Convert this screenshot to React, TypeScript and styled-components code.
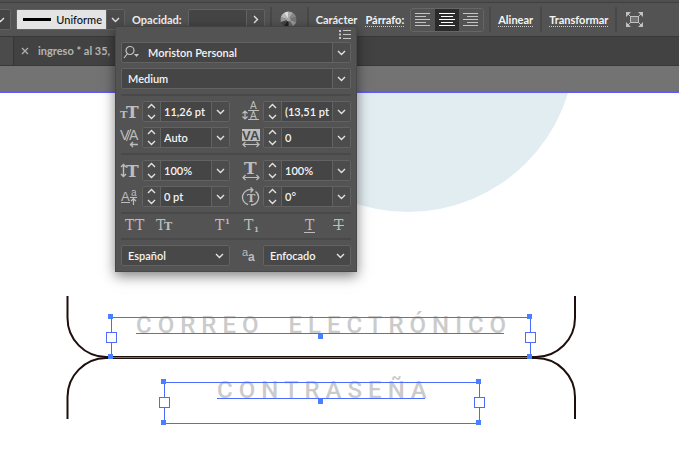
import React from 'react';
import styled, { createGlobalStyle, css } from 'styled-components';

const GlobalStyle = createGlobalStyle`
  *, *::before, *::after { box-sizing: border-box; }
  html, body { margin: 0; }
  body { background: #fff; color: #f2f2f2; font: 600 11px/14px Lato, "Noto Sans", sans-serif; }
  button, input, select { font: inherit; color: inherit; margin: 0; padding: 0; border: 0; border-radius: 0; background: none; outline: 0; }
  svg { display: block; flex: none; overflow: visible; }
`;

const Page = styled.div`
  position: relative;
  display: flex;
  flex-direction: column;
  min-height: 100vh;
  overflow: hidden;
`;

const Toolbar = styled.header`
  display: flex;
  align-items: center;
  height: 37px;
  padding-bottom: 1px;
  padding-top: 2px;
  background: #535353;
  border-top: 2px solid #4f4f4f;
  border-bottom: 1px solid #383838;
  box-shadow: inset 0 1px #404040;
`;

const Boxed = styled.div`
  display: flex;
  align-items: stretch;
  height: 21px;
  min-width: 0;
  border: 1px solid #626262;
  border-radius: 2px;
  background: #454545;
`;

const PreviousField = styled(Boxed)`
  width: 11px;
  align-items: center;
  border-left: 0;
  border-radius: 0 2px 2px 0;
  margin-right: 5px;
  padding-right: 5px;
  overflow: hidden;
  justify-content: flex-end;
`;

const StrokeField = styled(Boxed)`
  width: 109px;
  margin-right: 7px;
`;

const StrokeSwatch = styled.button`
  display: flex;
  align-items: center;
  gap: 5px;
  flex: 1;
  padding: 0 4px 0 6px;
  background: #e4e4e4;
  color: #111;
  font-weight: 500;
`;

const StrokeLine = styled.span`
  flex: 1;
  height: 3px;
  background: #000;
`;

const OpacityField = styled(Boxed)`
  width: 77px;
  margin-left: 6px;
`;

const ArrowButton = styled.button`
  display: flex;
  align-items: center;
  justify-content: center;
  flex: none;
  width: 18px;
  border-left: 1px solid #626262;
  background: #4c4c4c;
`;

const Divider = styled.span`
  flex: none;
  width: 2px;
  height: 25px;
  background: #484848;
`;

const SpacedDivider = styled(Divider)`
  margin-left: 5px;
`;

const toolbarText = css`
  flex: none;
  color: #f4f4f4;
  font-weight: 700;
  line-height: 13px;
  border-bottom: 1px dotted #c8c8c8;
`;

const PanelLink = styled.a`
  ${toolbarText}
  text-decoration: none;
`;

const OpacityLabel = styled.label`
  ${toolbarText}
`;

const ColorButton = styled.button`
  margin: 0 10px 0 8px;
`;

const LinkGroup = styled.div`
  display: flex;
  gap: 8px;
  padding: 0 6px 0 7px;
`;

const SpacedLink = styled(PanelLink)`
  margin: 0 7px;
`;

const AlignGroup = styled.div`
  display: flex;
  flex: none;
  height: 24px;
  width: 74px;
  margin-right: 5px;
  border: 1px solid #666;
  border-radius: 3px;
  overflow: hidden;
`;

const AlignButton = styled.button<{ $active?: boolean }>`
  display: flex;
  flex: 1;
  align-items: center;
  justify-content: center;
  color: ${p => (p.$active ? '#fff' : '#c4c4c4')};
  background: ${p => (p.$active ? '#2b2b2b' : '#535353')};
`;

const FitButton = styled.button`
  margin-left: 9px;
`;

const Tabs = styled.nav`
  display: flex;
  height: 29px;
  background: #424242;
  border-bottom: 1px solid #383838;
`;

const ClippedTab = styled.div`
  width: 14px;
  background: #4b4b4b;
  border-right: 1px solid #363636;
`;

const Tab = styled.div`
  display: flex;
  align-items: center;
  gap: 9px;
  padding-left: 7px;
  color: #b4b4b4;
  font-weight: 700;
`;

const Pasteboard = styled.div`
  height: 27px;
  background: #737373;
  border-bottom: 2px solid #5f5bff;
`;

const Canvas = styled.main`
  position: relative;
  flex: 1;
  min-height: 362px;
  background: #fff;
`;

const Artwork = styled.svg`
  position: absolute;
  left: 0;
  top: 0;
`;

const Frame = styled.div<{ $x: number; $y: number; $w: number; $h: number }>`
  position: absolute;
  left: ${p => p.$x}px;
  top: ${p => p.$y}px;
  width: ${p => p.$w}px;
  height: ${p => p.$h}px;
`;

const FrameOutline = styled.div`
  position: absolute;
  inset: 0;
  border: 1px solid #4c6cff;
`;

const FrameText = styled.div<{ $x: number }>`
  position: absolute;
  left: ${p => p.$x}px;
  top: -6px;
  color: #cbcbcb;
  font: 500 24px/28px Roboto, "Liberation Sans", sans-serif;
  letter-spacing: 6px;
  white-space: pre;
`;

const Baseline = styled.div<{ $x: number; $w: number }>`
  position: absolute;
  left: ${p => p.$x}px;
  width: ${p => p.$w}px;
  top: 16px;
  height: 1px;
  background: #4c6cff;
`;

const Handle = styled.span<{ $x: number; $y: number }>`
  position: absolute;
  left: ${p => p.$x}px;
  top: ${p => p.$y}px;
  width: 5px;
  height: 5px;
  background: #4a80ff;
`;

const Port = styled.span<{ $x: number }>`
  position: absolute;
  left: ${p => p.$x}px;
  top: 15px;
  width: 11px;
  height: 11px;
  border: 1px solid #4c6cff;
  background: #fff;
`;

const Panel = styled.section`
  position: absolute;
  left: 115px;
  top: 26px;
  width: 242px;
  padding: 3px 5px 5px;
  background: #535353;
  border: 1px solid #484848;
  border-top-color: #444;
  box-shadow: 0 4px 12px rgba(0, 0, 0, 0.5);
`;

const PanelMenu = styled.button`
  display: block;
  margin: 0 0 3px auto;
`;

const FamilyStack = styled.div`
  display: grid;
  gap: 5px;
`;

const Rule = styled.hr`
  height: 2px;
  margin: 5px 0;
  border: 0;
  background: #494949;
`;

const MetricGrid = styled.div`
  display: grid;
  grid-template-columns: 21px 1fr 33px 1fr;
  row-gap: 5px;
  align-items: center;
`;

const IconCell = styled.span<{ $second?: boolean }>`
  display: flex;
  padding-left: ${p => (p.$second ? 12 : 0)}px;
`;

const textBox = css`
  flex: 1;
  min-width: 0;
  width: 0;
  height: 19px;
  color: #f4f4f4;
`;

const Input = styled.input<{ $inset?: number }>`
  ${textBox}
  padding-left: ${p => p.$inset ?? 3}px;
`;

const Select = styled.select`
  ${textBox}
  appearance: none;
  padding-left: 6px;
`;

const Spinner = styled.span`
  display: flex;
  flex-direction: column;
  flex: none;
  width: 18px;
  border-right: 1px solid #626262;
  background: #4c4c4c;
`;

const SpinButton = styled.button`
  display: flex;
  flex: 1;
  align-items: center;
  justify-content: center;
`;

const SearchIcon = styled.span`
  display: flex;
  align-items: center;
  padding-left: 1px;
`;

const SelectField = styled(Boxed)`
  align-items: center;
  padding-right: 5px;
  background: #484848;
`;

const StyleRow = styled.div`
  display: flex;
  align-items: center;
  height: 14px;
  padding: 0 5px 0 4px;
`;

const StyleButton = styled.button<{ $gap?: number }>`
  margin-right: ${p => p.$gap ?? 0}px;
`;

const LanguageRow = styled.div`
  display: grid;
  grid-template-columns: 109px 33px 1fr;
  align-items: center;
`;

const Chevron = ({ up = false, right = false }: { up?: boolean; right?: boolean }) => (
  <svg width="9" height="7" viewBox="0 0 9 7" fill="none" stroke="#e2e2e2" strokeWidth="1.4">
    <path d={right ? 'M3 0 6.500 3.500 3 7' : up ? 'M1 5 4.5 1.5 8 5' : 'M1 2 4.5 5.5 8 2'} />
  </svg>
);

const AlignIcon = ({ lines }: { lines: [number, number][] }) => (
  <svg width="16" height="14" viewBox="0 0 16 14" fill="currentColor">
    {lines.map(([x, w], i) => <rect key={i} x={x} y={i * 3} width={w} height="1" />)}
  </svg>
);

const slab = { fontFamily: '"DejaVu Serif", serif' };
const plain = { fontFamily: '"Liberation Sans", Arial, sans-serif' };

const Glyph = ({ w = 20, h = 20, children }: { w?: number; h?: number; children: React.ReactNode }) => (
  <svg width={w} height={h} viewBox={`0 0 ${w} ${h}`} fill="#bdbdbd" fontWeight="400">{children}</svg>
);

const line = { fill: 'none', stroke: '#bdbdbd', strokeWidth: 1 };

const SizeIcon = () => (
  <Glyph>
    <text x="-1" y="16" fontSize="10" fontWeight="700" {...slab}>T</text>
    <text x="5" y="16" fontSize="17" fontWeight="700" {...slab}>T</text>
  </Glyph>
);
const LeadingIcon = () => (
  <Glyph>
    <path {...line} strokeWidth="1.2" d="M3 9v8M.5 11.500l2.500-2.500 2.500 2.500M.5 14.500 3 17l2.500-2.500M6 8.500h11M6 17.500h11" />
    <text x="8" y="7" fontSize="10" {...plain}>A</text>
    <text x="8" y="17" fontSize="10" {...plain}>A</text>
  </Glyph>
);
const KerningIcon = () => (
  <Glyph>
    <text x="-1" y="12" fontSize="14" {...plain}>V</text>
    <text x="8" y="12" fontSize="14" {...plain}>A</text>
    <path {...line} d="M5.500 13 10 1" />
    <path {...line} strokeWidth="1.3" d="M9 16.500h8M12 14l-2.500 2.500L12 19" />
  </Glyph>
);
const TrackingIcon = () => (
  <Glyph>
    <rect x="0" y="1" width="18" height="12" />
    <text x="0" y="12" fontSize="13" fontWeight="700" fill="#484848" {...plain}>V</text>
    <text x="8" y="12" fontSize="13" fontWeight="700" fill="#484848" {...plain}>A</text>
    <path {...line} strokeWidth="1.2" d="M1 16.5h16M3.500 14 1 16.500 3.500 19M14.500 14l2.500 2.500-2.500 2.500" />
  </Glyph>
);
const VerticalScaleIcon = () => (
  <Glyph>
    <path {...line} strokeWidth="1.4" d="M2.5 3.500v12M0 6l2.500-2.500L5 6M0 13l2.500 2.500L5 13" />
    <text x="5" y="16" fontSize="17" fontWeight="700" {...slab}>T</text>
  </Glyph>
);
const HorizontalScaleIcon = () => (
  <Glyph>
    <text x="2" y="13" fontSize="17" fontWeight="700" {...slab}>T</text>
    <path {...line} strokeWidth="1.2" d="M1 16.5h16M3.5 14 1 16.5 3.5 19M14.5 14l2.5 2.5-2.5 2.5" />
  </Glyph>
);
const BaselineIcon = () => (
  <Glyph>
    <text x="0" y="14" fontSize="13" {...plain}>A</text>
    <text x="10" y="9" fontSize="10" {...plain}>a</text>
    <path {...line} strokeWidth="1.2" d="M0 15.500h9M9 10.500h7M12.500 18v-6M10 14l2.500-2.500L15 14" />
  </Glyph>
);
const RotateIcon = () => (
  <Glyph>
    <path {...line} strokeWidth="1.3" d="M10 3A7.500 7.500 0 0 0 6 17.500M9 18A7.500 7.500 0 0 0 13.500 4.500M8.500 .5 11 3 8.500 5.500" />
    <text x="5" y="15" fontSize="11" fontWeight="700" {...slab}>T</text>
  </Glyph>
);
const AntialiasIcon = () => (
  <Glyph w={16} h={16}>
    <text x="0" y="8" fontSize="11" {...plain}>a</text>
    <text x="6" y="13" fontSize="12" fontWeight="700" {...plain}>a</text>
  </Glyph>
);

const Metric = ({ label, value, icon, second }: { label: string; value: string; icon: React.ReactNode; second?: boolean }) => (
  <>
    <IconCell $second={second}>{icon}</IconCell>
    <Boxed>
      <Spinner>
        <SpinButton aria-label={`Aumentar ${label}`}><Chevron up /></SpinButton>
        <SpinButton aria-label={`Reducir ${label}`}><Chevron /></SpinButton>
      </Spinner>
      <Input aria-label={label} defaultValue={value} />
      <ArrowButton aria-label={`Opciones de ${label}`}><Chevron /></ArrowButton>
    </Boxed>
  </>
);

const TextFrame = ({ x, y, w, h, text, textX, textW, midX }: {
  x: number; y: number; w: number; h: number; text: string; textX: number; textW: number; midX: number;
}) => (
  <Frame $x={x} $y={y} $w={w} $h={h}>
    <FrameText $x={textX}>{text}</FrameText>
    <FrameOutline />
    <Baseline $x={textX} $w={textW} />
    <Handle $x={-3} $y={-3} />
    <Handle $x={w - 4} $y={-3} />
    <Handle $x={-3} $y={h - 4} />
    <Handle $x={w - 4} $y={h - 4} />
    <Handle $x={midX} $y={17} />
    <Port $x={-5} />
    <Port $x={w - 6} />
  </Frame>
);

const wheel = ['#aaa', '#888', '#777', '#999', '#666', '#222', '#444', '#999', '#bbb', '#ddd'];

const ColorWheel = () => (
  <svg width="17" height="17" viewBox="-8.5 -8.5 17 17">
    {wheel.map((fill, i) => {
      const a = (i * Math.PI) / 5 - Math.PI / 2;
      const b = ((i + 1) * Math.PI) / 5 - Math.PI / 2;
      return <path key={i} fill={fill} d={`M0 0L${8 * Math.cos(a)} ${8 * Math.sin(a)}A8 8 0 0 1 ${8 * Math.cos(b)} ${8 * Math.sin(b)}Z`} />;
    })}
    <circle r="2" fill="#aaa" />
  </svg>
);

export default function App() {
  return (
    <Page>
      <GlobalStyle />
      <Toolbar>
        <PreviousField><Chevron /></PreviousField>
        <StrokeField>
          <StrokeSwatch><StrokeLine />Uniforme</StrokeSwatch>
          <ArrowButton aria-label="Perfil de trazo"><Chevron /></ArrowButton>
        </StrokeField>
        <OpacityLabel htmlFor="opacity">Opacidad:</OpacityLabel>
        <OpacityField>
          <Input id="opacity" />
          <ArrowButton aria-label="Ajustar opacidad"><Chevron right /></ArrowButton>
        </OpacityField>
        <SpacedDivider />
        <ColorButton aria-label="Volver a colorear"><ColorWheel /></ColorButton>
        <Divider />
        <LinkGroup>
          <PanelLink href="#caracter">Carácter</PanelLink>
          <PanelLink href="#parrafo">Párrafo:</PanelLink>
        </LinkGroup>
        <AlignGroup>
          <AlignButton aria-label="Alinear a la izquierda"><AlignIcon lines={[[0, 15], [0, 11], [0, 15], [0, 11], [0, 15]]} /></AlignButton>
          <AlignButton $active aria-label="Centrar"><AlignIcon lines={[[0, 16], [2, 12], [0, 16], [2, 12], [0, 16]]} /></AlignButton>
          <AlignButton aria-label="Alinear a la derecha"><AlignIcon lines={[[0, 15], [4, 11], [0, 15], [4, 11], [0, 15]]} /></AlignButton>
        </AlignGroup>
        <Divider />
        <SpacedLink href="#alinear">Alinear</SpacedLink>
        <Divider />
        <SpacedLink href="#transformar">Transformar</SpacedLink>
        <Divider />
        <FitButton aria-label="Aislar objeto">
          <svg width="17" height="15" viewBox="0 0 17 15" fill="#c0c0c0">
            <rect x="4.5" y="4.5" width="8" height="6" fill="#737373" stroke="#c0c0c0" />
            <path d="M0 0h5L0 5zM17 0h-5l5 5zM0 15h5L0 10zM17 15h-5l5-5z" />
            <path d="m1 1 4 4M16 1l-4 4M1 14l4-4M16 14l-4-4" stroke="#c0c0c0" />
          </svg>
        </FitButton>
      </Toolbar>
      <Tabs>
        <ClippedTab />
        <Tab>
          <svg width="8" height="8" viewBox="0 0 8 8" stroke="#b0b0b0" strokeWidth="1.3"><path d="m1 1 6 6M7 1 1 7" /></svg>
          ingreso * al 35,
        </Tab>
      </Tabs>
      <Pasteboard />
      <Canvas>
        <Artwork width="679" height="362" viewBox="0 93 679 362" fill="none">
          <defs><clipPath id="artboard"><rect y="93" width="679" height="362" /></clipPath></defs>
          <circle cx="408" cy="45" r="167" fill="#e2edf2" clipPath="url(#artboard)" />
          <g stroke="#1d0f0c" strokeWidth="2">
            <path d="M67.5 296V318A39 39 0 0 0 106 357H536A39 39 0 0 0 575 318V296" />
            <path d="M67.5 419V397A39 39 0 0 1 106 358H536A39 39 0 0 1 575 397V419" />
          </g>
        </Artwork>
        <TextFrame x={111} y={224} w={420} h={41} text="CORREO  ELECTRÓNICO" textX={25} textW={368} midX={207} />
        <TextFrame x={164} y={289} w={316} h={42} text="CONTRASEÑA" textX={53} textW={208} midX={154} />
      </Canvas>

      <Panel aria-label="Carácter">
        <PanelMenu aria-label="Menú del panel">
          <svg width="12" height="9" viewBox="0 0 12 9" fill="#c4c4c4">
            <path d="M0 0h2v2H0zM4 0h8v1H4zM0 3.5h2v2H0zM4 4h8v1H4zM0 7h2v2H0zM4 8h8v1H4z" />
          </svg>
        </PanelMenu>
        <FamilyStack>
          <Boxed>
            <SearchIcon>
              <svg width="18" height="13" viewBox="0 0 18 13" fill="none" stroke="#c4c4c4" strokeWidth="1.2">
                <circle cx="7" cy="4.5" r="4" /><path d="M4.500 7.500 1 12" /><path d="M11 8h5l-2.500 3z" fill="#c4c4c4" stroke="none" />
              </svg>
            </SearchIcon>
            <Input aria-label="Familia de fuentes" $inset={7} defaultValue="Moriston Personal" />
            <ArrowButton aria-label="Elegir familia"><Chevron /></ArrowButton>
          </Boxed>
          <Boxed>
            <Select aria-label="Estilo de fuente" defaultValue="Medium"><option>Medium</option></Select>
            <ArrowButton aria-label="Elegir estilo"><Chevron /></ArrowButton>
          </Boxed>
        </FamilyStack>
        <Rule />
        <MetricGrid>
          <Metric label="tamaño" value="11,26 pt" icon={<SizeIcon />} />
          <Metric label="interlineado" value="(13,51 pt" icon={<LeadingIcon />} second />
          <Metric label="kerning" value="Auto" icon={<KerningIcon />} />
          <Metric label="tracking" value="0" icon={<TrackingIcon />} second />
        </MetricGrid>
        <Rule />
        <MetricGrid>
          <Metric label="escala vertical" value="100%" icon={<VerticalScaleIcon />} />
          <Metric label="escala horizontal" value="100%" icon={<HorizontalScaleIcon />} second />
          <Metric label="línea de base" value="0 pt" icon={<BaselineIcon />} />
          <Metric label="rotación" value="0°" icon={<RotateIcon />} second />
        </MetricGrid>
        <Rule />
        <StyleRow>
          <StyleButton aria-label="Mayúsculas" $gap={11}>
            <Glyph w={20} h={14}><text x="0" y="11" fontSize="14" {...slab}>T</text><text x="10" y="11" fontSize="14" {...slab}>T</text></Glyph>
          </StyleButton>
          <StyleButton aria-label="Versalitas" $gap={42}>
            <Glyph w={17} h={14}><text x="0" y="11" fontSize="14" {...slab}>T</text><text x="8" y="11" fontSize="11" fontWeight="700" {...slab}>T</text></Glyph>
          </StyleButton>
          <StyleButton aria-label="Superíndice" $gap={13}>
            <Glyph w={16} h={14}><text x="0" y="11" fontSize="14" {...slab}>T</text><text x="10" y="5" fontSize="7" fontWeight="700" {...slab}>1</text></Glyph>
          </StyleButton>
          <StyleButton aria-label="Subíndice" $gap={44}>
            <Glyph w={16} h={14}><text x="0" y="11" fontSize="14" {...slab}>T</text><text x="10" y="13" fontSize="7" fontWeight="700" {...slab}>1</text></Glyph>
          </StyleButton>
          <StyleButton aria-label="Subrayado" $gap={18}>
            <Glyph w={11} h={14}><text x="1" y="11" fontSize="14" {...slab}>T</text><rect y="13" width="11" height="1" /></Glyph>
          </StyleButton>
          <StyleButton aria-label="Tachado">
            <Glyph w={11} h={14}><text x="1" y="11" fontSize="14" {...slab}>T</text><rect y="6" width="11" height="1" /></Glyph>
          </StyleButton>
        </StyleRow>
        <Rule />
        <LanguageRow>
          <SelectField>
            <Select aria-label="Idioma" defaultValue="Español"><option>Español</option></Select><Chevron />
          </SelectField>
          <IconCell $second><AntialiasIcon /></IconCell>
          <SelectField>
            <Select aria-label="Suavizado" defaultValue="Enfocado"><option>Enfocado</option></Select><Chevron />
          </SelectField>
        </LanguageRow>
      </Panel>
    </Page>
  );
}
